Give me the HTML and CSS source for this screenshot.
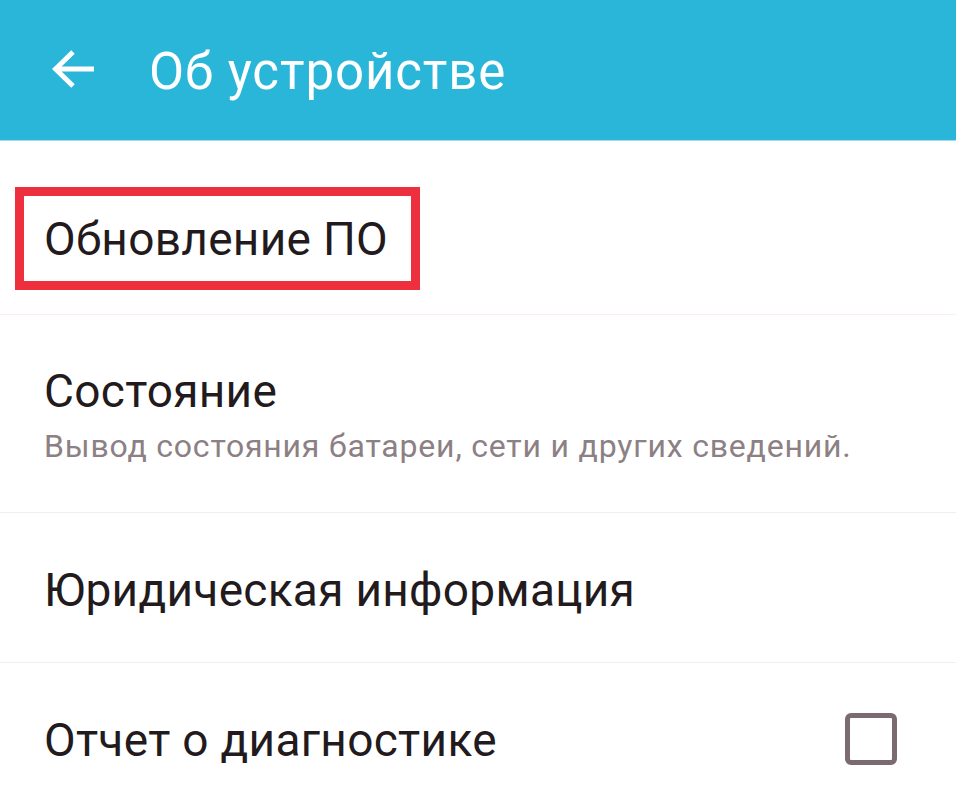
FILE: index.html
```html
<!DOCTYPE html>
<html lang="ru">
<head>
<meta charset="utf-8">
<title>Об устройстве</title>
<link rel="stylesheet" href="styles.css">
</head>
<body>
<header class="appbar">
  <svg class="back" width="44" height="40" viewBox="0 0 44 40" aria-hidden="true">
    <path d="M42 20H4 M21 3L3.5 20L21 37" fill="none" stroke="#fff" stroke-width="5" stroke-linecap="butt" stroke-linejoin="miter"/>
  </svg>
  <h1 class="title">Об устройстве</h1>
</header>
<main class="list">
  <div class="row row-update">
    <div class="highlight"><span class="label">Обновление ПО</span></div>
  </div>
  <div class="row row-status">
    <div class="label">Состояние</div>
    <div class="sub">Вывод состояния батареи, сети и других сведений.</div>
  </div>
  <div class="row row-legal">
    <div class="label">Юридическая информация</div>
  </div>
  <div class="row row-diag">
    <div class="label">Отчет о диагностике</div>
    <span class="checkbox"></span>
  </div>
</main>
</body>
</html>
```
FILE: styles.css
```css
html, body {
  margin: 0;
  padding: 0;
  background: #ffffff;
}
body {
  width: 956px;
  font-family: Roboto, "Noto Sans", sans-serif;
  color: #231b1d;
  overflow: hidden;
}
.appbar {
  height: 141px;
  box-sizing: border-box;
  background: #2ab6d8;
  border-bottom: 1px solid #9fdcec;
  display: flex;
  align-items: center;
  padding-left: 52px;
  padding-top: 4px;
}
.back {
  display: block;
  flex: none;
  margin-top: -6px;
}
.title {
  margin: 0 0 0 53px;
  font-size: 51px;
  font-weight: 400;
  letter-spacing: 0.9px;
  line-height: 60px;
  color: #ffffff;
}
.list {
  display: flex;
  flex-direction: column;
}
.row {
  border-bottom: 1px solid #f4eced;
  box-sizing: border-box;
}
.label {
  font-size: 46px;
  line-height: 54px;
  font-weight: 400;
  letter-spacing: 0.3px;
  color: #221a1c;
}
.row-update {
  height: 174px;
  padding-top: 46px;
  padding-left: 15px;
  border-bottom-color: #fcedef;
}
.highlight {
  display: inline-block;
  border: 9px solid #ee2f3d;
  padding: 16px 23px 15px 20px;
}
.highlight .label {
  display: block;
}
.row-status {
  height: 198px;
  padding: 49px 0 0 44px;
}
.sub {
  margin-top: 10px;
  font-size: 32px;
  line-height: 36px;
  letter-spacing: 0.8px;
  color: #8c8084;
}
.row-legal {
  height: 150px;
  padding: 50px 0 0 44px;
  border-bottom-color: #f2eeea;
}
.row-diag {
  height: 140px;
  padding: 14px 59px 0 44px;
  display: flex;
  align-items: center;
  justify-content: space-between;
  border-bottom: none;
}
.checkbox {
  width: 52px;
  height: 52px;
  box-sizing: border-box;
  border: 5px solid #7b6a70;
  border-radius: 6px;
  margin-top: -2px;
}
```
